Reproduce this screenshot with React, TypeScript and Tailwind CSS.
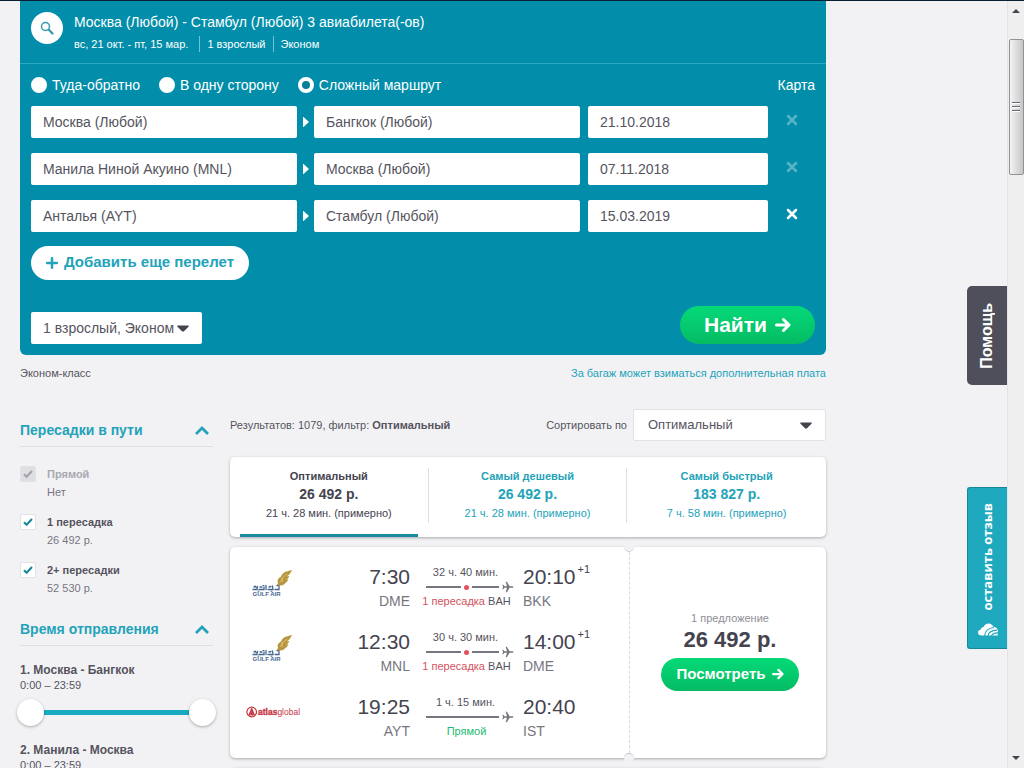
import React, { useState } from 'react';

const routes = [
    { from: 'Москва (Любой)', to: 'Бангкок (Любой)', date: '21.10.2018', removable: false },
    { from: 'Манила Ниной Акуино (MNL)', to: 'Москва (Любой)', date: '07.11.2018', removable: false },
    { from: 'Анталья (AYT)', to: 'Стамбул (Любой)', date: '15.03.2019', removable: true },
];

const tripTypes = [
    { id: 'return', label: 'Туда-обратно' },
    { id: 'oneway', label: 'В одну сторону' },
    { id: 'multi', label: 'Сложный маршрут' },
];

const stops = [
    { id: 'direct', label: 'Прямой', price: 'Нет', disabled: true },
    { id: 'one', label: '1 пересадка', price: '26 492 р.', disabled: false },
    { id: 'two', label: '2+ пересадки', price: '52 530 р.', disabled: false },
];

const departures = [
    { id: 'leg1', label: '1. Москва - Бангкок', range: '0:00 – 23:59' },
    { id: 'leg2', label: '2. Манила - Москва', range: '0:00 – 23:59' },
];

const sortTabs = [
    { label: 'Оптимальный', price: '26 492 р.', time: '21 ч. 28 мин. (примерно)' },
    { label: 'Самый дешевый', price: '26 492 р.', time: '21 ч. 28 мин. (примерно)' },
    { label: 'Самый быстрый', price: '183 827 р.', time: '7 ч. 58 мин. (примерно)' },
];

const legs = [
    { airline: 'gulf', dep: '7:30', from: 'DME', arr: '20:10', to: 'BKK', plus: '+1', time: '32 ч. 40 мин.', via: 'BAH' },
    { airline: 'gulf', dep: '12:30', from: 'MNL', arr: '14:00', to: 'DME', plus: '+1', time: '30 ч. 30 мин.', via: 'BAH' },
    { airline: 'atlas', dep: '19:25', from: 'AYT', arr: '20:40', to: 'IST', plus: '', time: '1 ч. 15 мин.', via: '' },
];

const Caret = ({ className }: { className: string }) => (
    <svg viewBox="0 0 12 7" className={`pointer-events-none absolute h-[7px] w-3 fill-[#44434f] ${className}`}>
        <path d="M1 .5h10c.8 0 1 .7.5 1.200L7 6.200c-.6.6-1.400.6-2 0L.5 1.700C0 1.200.2.5 1 .5z" />
    </svg>
);

const Arrow = ({ className }: { className: string }) => (
    <svg viewBox="0 0 16 16" className={className} fill="none" stroke="currentColor" strokeWidth="3" strokeLinecap="round" strokeLinejoin="round">
        <path d="M1.500 8h12M8.500 2.500L14 8l-5.500 5.500" />
    </svg>
);

const Plane = () => (
    <svg viewBox="0 0 12 12" className="size-3 shrink-0 fill-[#77767f]">
        <path d="M11.500 6c0-.5-.7-.8-1.500-.8H7.600L4.900.8H3.700l1.300 4.400H2.500L1.300 3.800H.4L1 6 .4 8.200h.9l1.200-1.400H5l-1.300 4.400h1.200l2.700-4.400H10c.8 0 1.500-.3 1.500-.8z" />
    </svg>
);

const GulfAirLogo = () => (
    <svg viewBox="0 0 54 28" className="h-7 w-[54px]" role="img" aria-label="Gulf Air">
        <path fill="#b8963c" d="M46 0c-3 1-6 1-8.500 3-1.500 1.200-2 2.500-2.500 3.500-1.500 1-2.800 1.800-3.300 3.500-.4 1.200 0 2.200.5 2.800-.8 1-1 1.800-.3 2.600 1 .9 1.600.7 2.600 0 .8-.4 1.700.2 2.500-.4 3-2.200 4.800-3.500 5.300-6-.8.5-1.600.7-2.400.7 1.800-.8 3-2.200 3.300-4-.8.5-1.500.6-2.300.6C43.500 5 45 2.500 46 0z" />
        <path fill="none" stroke="#efe3bd" strokeWidth=".5" d="M34.500 12c1-4 4-6 7-8M36 7l.5 5" />
        <g fill="none" stroke="#456690" strokeWidth="1.300" strokeLinecap="round">
            <path d="M7 19.500h4l.5-3M8 17c1-1.200 2-.8 2 .5M13 19.500h5V17M14 17h2M20 19.500v-4M22 19.500h5l-.5-3.500M23 17l2-.5M29 19.500h4v-3M31 15.500h1" />
            <path d="M12 21.200h1M17 15.500h1M25 21.200h1" strokeWidth="1" />
        </g>
        <text x="6.500" y="26" fontSize="6" fontWeight="bold" fill="#456690" fontFamily="Liberation Sans, sans-serif">GULF AIR</text>
    </svg>
);

const AtlasLogo = () => (
    <svg viewBox="0 0 56 12" className="h-3 w-14" role="img" aria-label="Atlasglobal">
        <circle cx="5.700" cy="6" r="4.800" fill="none" stroke="#c4333f" strokeWidth="1.200" />
        <path d="M5.700 2.500L3 9.500M5.700 2.500l2.700 7M4.600 9.500l1.100-3 1.100 3" fill="none" stroke="#c4333f" strokeWidth="1.300" />
        <text x="12" y="8.600" fontSize="8.500" fontFamily="Liberation Sans, sans-serif" fill="#c4333f">
            <tspan fontWeight="bold" stroke="#c4333f" strokeWidth=".3">atlas</tspan>
            <tspan>global</tspan>
        </text>
    </svg>
);

const SearchPanel = () => {
    const [trip, setTrip] = useState('multi');

    return (
        <section className="rounded-b-md bg-[#028eaa] text-white">
            <header className="flex h-[63px] items-start gap-[11px] border-b border-[#2ba9c0] px-[11px] pt-[11px]">
                <button aria-label="Поиск" className="flex size-8 items-center justify-center rounded-full bg-white">
                    <svg viewBox="0 0 14 14" className="size-[14px]" fill="none" stroke="#3499ab" strokeLinecap="round">
                        <circle cx="5.500" cy="5.500" r="4" strokeWidth="1.500" />
                        <path d="M8.800 8.800l3.700 3.700" strokeWidth="2.200" />
                    </svg>
                </button>
                <div>
                    <h1 className="text-sm leading-5">Москва (Любой) - Стамбул (Любой) 3 авиабилета(-ов)</h1>
                    <p className="mt-1 flex text-[11px] leading-4">
                        <span className="pr-[11px]">вс, 21 окт. - пт, 15 мар.</span>
                        <span className="border-l border-[#6fc3d2] px-[7px]">1 взрослый</span>
                        <span className="border-l border-[#6fc3d2] pl-[7px]">Эконом</span>
                    </p>
                </div>
            </header>

            <div className="px-[11px] pb-[11px]">
                <div className="flex h-[42px] items-center gap-[19px] text-sm">
                    {tripTypes.map((t) => (
                        <label key={t.id} className="flex items-center gap-[5px]">
                            <input
                                type="radio"
                                name="trip"
                                checked={trip === t.id}
                                onChange={() => setTrip(t.id)}
                                className="size-4 appearance-none rounded-full border-4 border-white bg-white checked:bg-[#0a7f98]"
                            />
                            {t.label}
                        </label>
                    ))}
                    <a href="#map" className="ml-auto">Карта</a>
                </div>

                <div className="space-y-[15px] text-sm text-[#55545e]">
                    {routes.map((r) => (
                        <div key={r.from} className="flex h-8 items-center">
                            <input aria-label="Откуда" defaultValue={r.from} className="h-8 min-w-0 flex-1 rounded-xs bg-white px-3" />
                            <svg viewBox="0 0 17 12" className="h-3 w-[17px] fill-white">
                                <path d="M6 1.500v9c0 .5.5.5.8.2l4.700-4.200c.4-.4.4-.6 0-1L6.800 1.300C6.500 1 6 1 6 1.500z" />
                            </svg>
                            <input aria-label="Куда" defaultValue={r.to} className="h-8 min-w-0 flex-1 rounded-xs bg-white px-3" />
                            <input aria-label="Дата" defaultValue={r.date} className="ml-2 h-8 w-[180px] rounded-xs bg-white px-3" />
                            <button aria-label="Удалить" disabled={!r.removable} className="flex w-[47px] justify-center pb-1 text-white disabled:text-[#58b3c5]">
                                <svg viewBox="0 0 12 12" className="size-3" fill="none" stroke="currentColor" strokeWidth="2.500" strokeLinecap="round">
                                    <path d="M2 2l8 8M10 2l-8 8" />
                                </svg>
                            </button>
                        </div>
                    ))}
                </div>

                <button className="mt-[14px] flex h-[34px] w-[218px] items-center justify-center gap-[6px] rounded-full bg-white pb-px text-[15px] font-bold text-[#22a3b9]">
                    <svg viewBox="0 0 12 12" className="size-3" stroke="currentColor" strokeWidth="2.500" strokeLinecap="round">
                        <path d="M6 1.200v9.600M1.200 6h9.600" />
                    </svg>
                    Добавить еще перелет
                </button>

                <div className="mt-[26px] flex items-end justify-between">
                    <div className="relative">
                        <select aria-label="Пассажиры и класс" className="block h-8 w-[171px] appearance-none rounded-xs bg-white pl-3 text-sm text-[#55545e]">
                            <option>1 взрослый, Эконом</option>
                        </select>
                        <Caret className="top-[13px] right-[13px]" />
                    </div>
                    <button className="flex h-[38px] w-[135px] items-center justify-center gap-2 rounded-full bg-gradient-to-b from-[#05da78] to-[#05bb63] text-[21px] font-bold">
                        Найти
                        <Arrow className="size-4" />
                    </button>
                </div>
            </div>
        </section>
    );
};

const FilterHeading = ({ children }: { children: React.ReactNode }) => (
    <h2 className="border-b border-[#dfdfe3] text-sm font-bold text-[#22a3b9]">
        <button className="flex h-8 w-full items-center justify-between pr-1">
            {children}
            <svg viewBox="0 0 14 9" className="h-[9px] w-[14px]" fill="none" stroke="currentColor" strokeWidth="2.800">
                <path d="M1 8l6-6 6 6" />
            </svg>
        </button>
    </h2>
);

const thumb =
    'pointer-events-none absolute inset-0 w-full appearance-none bg-transparent [&::-webkit-slider-thumb]:pointer-events-auto [&::-webkit-slider-thumb]:size-[27px] [&::-webkit-slider-thumb]:appearance-none [&::-webkit-slider-thumb]:rounded-full [&::-webkit-slider-thumb]:bg-white [&::-webkit-slider-thumb]:shadow-[0_1px_3px_rgba(0,0,0,0.3)]';

const Filters = () => (
    <aside className="w-[193px] shrink-0">
        <FilterHeading>Пересадки в пути</FilterHeading>
        <ul className="mt-[18px] space-y-[11px] text-[11px] text-[#55545e]">
            {stops.map((s) => (
                <li key={s.id}>
                    <label className="flex gap-[11px]">
                        <span className="relative mt-[1px] size-4 shrink-0">
                            <input
                                type="checkbox"
                                defaultChecked
                                disabled={s.disabled}
                                className="peer block size-4 appearance-none rounded-xs border border-[#e2e2e6] bg-white disabled:bg-[#dfdfe3]"
                            />
                            <svg viewBox="0 0 16 16" className="pointer-events-none absolute inset-0 size-4 text-[#1b8a98] peer-disabled:text-[#a3a3aa]" fill="none" stroke="currentColor" strokeWidth="2.200">
                                <path d="M4 8.300l2.600 2.400L12 5" />
                            </svg>
                        </span>
                        <span>
                            <span className={s.disabled ? 'block leading-[18px] font-bold text-[#a9a9b0]' : 'block leading-[18px] font-bold'}>{s.label}</span>
                            <span className="block leading-[19px] text-[#77767f]">{s.price}</span>
                        </span>
                    </label>
                </li>
            ))}
        </ul>

        <div className="mt-[15px]">
            <FilterHeading>Время отправления</FilterHeading>
        </div>
        {departures.map((d) => (
            <div key={d.id} className="mt-4 text-[11px] text-[#55545e]">
                <h3 className="text-xs leading-4 font-bold">{d.label}</h3>
                <p className="leading-[14px]">{d.range}</p>
                <div className="relative -mx-[3px] mt-[7px] h-[27px]">
                    <div className="mx-3 h-full py-[11px]">
                        <div className="h-[5px] bg-[#18abc2]" />
                    </div>
                    <input type="range" aria-label="Не раньше" min={0} max={1439} defaultValue={0} className={thumb} />
                    <input type="range" aria-label="Не позже" min={0} max={1439} defaultValue={1439} className={thumb} />
                </div>
            </div>
        ))}
    </aside>
);

const Ticket = () => (
    <article className="relative flex rounded-[5px] bg-white shadow-[0_1px_3px_rgba(0,0,0,0.3)]">
        <div className="min-w-0 flex-1 space-y-[15px] pt-4 pb-[15px]">
            {legs.map((l) => (
                <div key={l.dep} className="flex h-[50px] items-start">
                    <div className="w-[85px] pt-[7px] pl-4">
                        {l.airline === 'gulf' ? <GulfAirLogo /> : <div className="pt-[6px]"><AtlasLogo /></div>}
                    </div>
                    <div className="w-[95px] text-right">
                        <div className="text-[21px] leading-7 text-[#44434f]">{l.dep}</div>
                        <div className="text-sm leading-5 text-[#77767f]">{l.from}</div>
                    </div>
                    <div className="w-[113px] text-center text-[11px] text-[#55545e]">
                        <div className="pr-[2px] leading-[18px]">{l.time}</div>
                        <div className="flex h-3 items-center gap-[3px] pr-[9px] pl-4">
                            <span className="h-[2px] flex-4 bg-[#77767f]" />
                            {l.via && (
                                <>
                                    <span className="size-[5px] rounded-full bg-[#e8505b]" />
                                    <span className="h-[2px] flex-3 bg-[#77767f]" />
                                </>
                            )}
                            <Plane />
                        </div>
                        <div className="leading-4">
                            {l.via ? (
                                <><span className="text-[#d2525d]">1 пересадка</span> {l.via}</>
                            ) : (
                                <span className="text-[#22bb70]">Прямой</span>
                            )}
                        </div>
                    </div>
                    <div>
                        <div className="flex text-[21px] leading-7 text-[#44434f]">
                            {l.arr}
                            <span className="pl-[2px] text-[11px] leading-3">{l.plus}</span>
                        </div>
                        <div className="text-sm leading-5 text-[#77767f]">{l.to}</div>
                    </div>
                </div>
            ))}
        </div>

        <div className="relative flex w-[197px] flex-col items-center justify-center border-l border-dashed border-[#d9d9de] pb-[5px] pl-1">
            <span className="absolute -top-[5px] -left-[6px] size-[10px] rounded-full border-b border-[#cfcfd4] bg-[#f2f2f5]" />
            <span className="absolute -bottom-[5px] -left-[6px] size-[10px] rounded-full border-t border-[#c4c4c9] bg-[#f2f2f5]" />
            <span className="text-[11px] leading-4 text-[#8f8e96]">1 предложение</span>
            <strong className="text-[22px] leading-7 text-[#44434f]">26 492 р.</strong>
            <button className="mt-1 flex h-[33px] w-[138px] items-center justify-center gap-[6px] rounded-full bg-gradient-to-b from-[#05da78] to-[#05bb63] text-[15px] font-bold text-white">
                Посмотреть
                <Arrow className="size-3" />
            </button>
        </div>
    </article>
);

const Results = () => (
    <div className="min-w-0 flex-1">
        <div className="-mt-[5px] flex h-8 items-center text-[11px] text-[#55545e]">
            <p>Результатов: 1079, фильтр: <b>Оптимальный</b></p>
            <label htmlFor="sort" className="ml-auto pr-[6px]">Сортировать по</label>
            <div className="relative">
                <select id="sort" className="block h-8 w-[193px] appearance-none rounded-xs border border-[#e2e2e6] bg-white pl-[14px] text-[13px]">
                    <option>Оптимальный</option>
                </select>
                <Caret className="top-[13px] right-[14px]" />
            </div>
        </div>

        <div className="mt-4 grid h-20 grid-cols-3 rounded-[5px] bg-white shadow-[0_1px_3px_rgba(0,0,0,0.3)]">
            {sortTabs.map((t, i) => (
                <button key={t.label} className={`flex flex-col ${i === 0 ? 'text-[#44434f]' : 'text-[#22a3b9]'}`}>
                    <span className={`mt-[11px] block h-[55px] w-full text-[11px] ${i < 2 ? 'border-r border-[#dfdfe3]' : ''}`}>
                        <b className="block leading-4">{t.label}</b>
                        <b className="block text-sm leading-5">{t.price}</b>
                        <span className="block leading-[18px]">{t.time}</span>
                    </span>
                    {i === 0 && <span className="mt-[11px] ml-[10px] h-[3px] w-[178px] bg-[#1b8a9c]" />}
                </button>
            ))}
        </div>

        <div className="mt-[10px] space-y-[10px]">
            <Ticket />
            {/* next result, still loading */}
            <div className="h-52 rounded-[5px] bg-white shadow-[0_1px_3px_rgba(0,0,0,0.3)]" />
        </div>
    </div>
);

const SideTabs = () => (
    <>
        <button className="fixed top-[286px] right-[17px] flex h-[99px] w-10 items-center justify-center rounded-l-[5px] bg-[#4e4f5a] text-white">
            <span className="rotate-180 text-base font-bold [writing-mode:vertical-rl]">Помощь</span>
        </button>
        <button className="fixed top-[487px] right-[17px] flex h-[162px] w-10 flex-col items-center justify-center gap-3 rounded-l-[3px] border border-r-0 border-[#16879a] bg-[#1ea9be] pt-1 text-white">
            <span className="rotate-180 font-['Open_Sans',sans-serif] text-[13px] font-bold [writing-mode:vertical-rl]">оставить отзыв</span>
            <svg viewBox="0 0 20 14" className="h-[14px] w-5">
                <path fill="#fff" d="M4 12.500C1.500 12.500 0 11.300 0 9.500s1.400-2.800 2.700-2.800C2.900 4.800 4.300 3.900 5.600 4 6.500 1.700 8.400.5 10.500.5c2.400 0 4 1.300 4.800 3.200 2.500.1 4.200 1.700 4.500 3.800V12.500H4z" />
                <g fill="none" stroke="#1ea9be" strokeWidth="1.200">
                    <path d="M6.500 13c.5-4.500 4-8 9.500-8.500M10 13c.4-3 3-5.500 9-5.800M13.500 13c.4-1.800 2-3 6.500-3.200" />
                </g>
            </svg>
        </button>
    </>
);

const ScrollBar = () => (
    <div className="flex w-[17px] shrink-0 flex-col items-center border-l border-[#e3e3e3] bg-[#efefef]">
        <svg viewBox="0 0 8 4" className="mt-2 h-1 w-2 fill-[#44434f]"><path d="M4 0l4 4H0z" /></svg>
        <div className="mt-[26px] flex h-[136px] w-[15px] flex-col items-center justify-center gap-[2px] rounded-[2px] border border-[#929292] bg-gradient-to-r from-[#f4f4f4] to-[#c6c6ca]">
            <span className="h-[2px] w-2 border-b border-white bg-[#66666b]" />
            <span className="h-[2px] w-2 border-b border-white bg-[#66666b]" />
            <span className="h-[2px] w-2 border-b border-white bg-[#66666b]" />
        </div>
        <svg viewBox="0 0 8 4" className="mt-auto mb-2 h-1 w-2 fill-[#44434f]"><path d="M4 4l4-4H0z" /></svg>
    </div>
);

export default function App() {
    return (
        <div className="flex h-screen overflow-hidden border-t border-[#0b1f33] bg-[#f2f2f5] font-['Liberation_Sans',Arial,sans-serif]">
            <main className="min-w-0 flex-1 pl-5">
                <div className="max-w-[806px]">
                    <SearchPanel />
                    <div className="mt-[10px] flex justify-between text-[11px] leading-4 text-[#55545e]">
                        <span>Эконом-класс</span>
                        <a href="#baggage" className="text-[#22a3b9]">За багаж может взиматься дополнительная плата</a>
                    </div>
                    <div className="mt-[33px] flex gap-[17px]">
                        <Filters />
                        <Results />
                    </div>
                </div>
            </main>
            <SideTabs />
            <ScrollBar />
        </div>
    );
}
